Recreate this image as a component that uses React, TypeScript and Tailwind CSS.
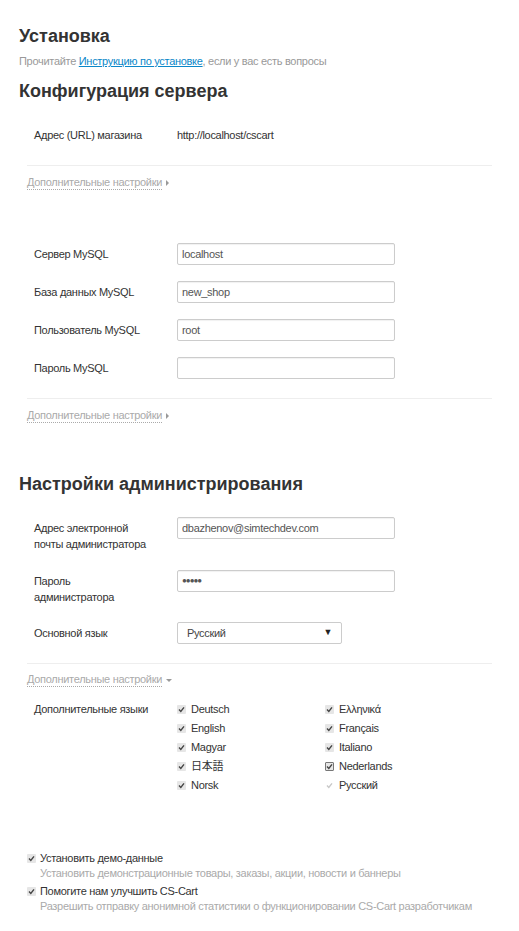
import React from "react";

const FONT = { fontFamily: '"Liberation Sans", Arial, "Noto Sans CJK JP", sans-serif' };

function Check({ muted = false, boxed = false }: { muted?: boolean; boxed?: boolean }) {
  return (
    <span
      className={`inline-flex w-[9px] h-[9px] shrink-0 items-center justify-center rounded-[1px] ${
        muted ? "bg-transparent" : "bg-[#e6e6e6]"
      } ${boxed ? "border border-[#777]" : ""}`}
    >
      <svg width="7" height="7" viewBox="0 0 7 7">
        <path
          d="M1 3.6 L2.8 5.4 L6 1.4"
          fill="none"
          stroke={muted ? "#c8c8c8" : "#444"}
          strokeWidth="1.4"
        />
      </svg>
    </span>
  );
}

function MoreLink({ open = false }: { open?: boolean }) {
  return (
    <div className="px-[8px] flex items-center h-4 text-[11px] text-[#aaa]">
      <span className="border-b border-dotted border-[#aaa] leading-[13px]">Дополнительные настройки</span>
      {open ? (
        <span className="ml-[4px] inline-block w-0 h-0 border-l-[3px] border-r-[3px] border-t-[3px] border-l-transparent border-r-transparent border-t-[#999]" />
      ) : (
        <span className="ml-[4px] inline-block w-0 h-0 border-t-[3px] border-b-[3px] border-l-[3px] border-t-transparent border-b-transparent border-l-[#999]" />
      )}
    </div>
  );
}

function Separator() {
  return <div className="mx-[8px] h-px bg-[#eee]" />;
}

function InputRow({ label, value, type = "text" }: { label: React.ReactNode; value: string; type?: string }) {
  return (
    <div className="flex items-start pl-[15px]">
      <div className="w-[143px] pt-[3px] leading-4 text-[11px] text-[#333]">{label}</div>
      <div className="w-[218px] h-[22px] border border-[#ccc] rounded-[2px] shadow-[inset_0_1px_1px_rgba(0,0,0,0.06)] px-[4px] flex items-center text-[11px] text-[#555]">
        {type === "password" ? <span className="tracking-[-1px] text-[8px]">●●●●●</span> : value}
      </div>
    </div>
  );
}

const LANGS_LEFT = ["Deutsch", "English", "Magyar", "日本語", "Norsk"];
const LANGS_RIGHT = ["Ελληνικά", "Français", "Italiano", "Nederlands", "Русский"];

export default function App() {
  return (
    <div className="bg-white min-h-[931px] px-[19px] pt-[25px] text-[#333] tracking-[-0.3px]" style={FONT}>
      <h1 className="text-[18px] leading-[22px] font-bold text-[#333] tracking-normal">Установка</h1>
      <p className="mt-[6px] text-[11px] leading-4 text-[#999]">
        Прочитайте{" "}
        <a className="text-[#0b87c9] underline" href="#">
          Инструкцию по установке
        </a>
        , если у вас есть вопросы
      </p>

      <h2 className="mt-[11px] text-[18px] leading-[22px] font-bold text-[#333] tracking-normal">
        Конфигурация сервера
      </h2>

      <div className="mt-[22px] flex items-center h-[22px] pl-[15px] text-[11px]">
        <div className="w-[143px] text-[#333]">Адрес (URL) магазина</div>
        <div className="text-[#333]">http://localhost/cscart</div>
      </div>

      <div className="mt-[19px]">
        <Separator />
      </div>
      <div className="mt-[9px]">
        <MoreLink />
      </div>

      <div className="mt-[52px] flex flex-col gap-[16px]">
        <InputRow label="Сервер MySQL" value="localhost" />
        <InputRow label="База данных MySQL" value="new_shop" />
        <InputRow label="Пользователь MySQL" value="root" />
        <InputRow label="Пароль MySQL" value="" />
      </div>

      <div className="mt-[19px]">
        <Separator />
      </div>
      <div className="mt-[9px]">
        <MoreLink />
      </div>

      <h2 className="mt-[49px] text-[18px] leading-[22px] font-bold text-[#333] tracking-normal">
        Настройки администрирования
      </h2>

      <div className="mt-[22px] flex flex-col">
        <InputRow
          label={
            <>
              Адрес электронной
              <br />
              почты администратора
            </>
          }
          value="dbazhenov@simtechdev.com"
        />
        <div className="mt-[18px]">
          <InputRow
            label={
              <>
                Пароль
                <br />
                администратора
              </>
            }
            value=""
            type="password"
          />
        </div>
        <div className="mt-[17px] flex items-center pl-[15px]">
          <div className="w-[143px] text-[11px] text-[#333]">Основной язык</div>
          <div className="w-[165px] h-[22px] border border-[#ccc] rounded-[2px] pl-[9px] pr-[9px] flex items-center justify-between text-[11px] text-[#444]">
            <span>Русский</span>
            <span className="text-[9px] text-[#222]">▼</span>
          </div>
        </div>
      </div>

      <div className="mt-[19px]">
        <Separator />
      </div>
      <div className="mt-[8px]">
        <MoreLink open />
      </div>

      <div className="mt-[12px] flex pl-[15px] text-[11px]">
        <div className="w-[143px] h-[19px] flex items-center text-[#333]">Дополнительные языки</div>
        <div className="w-[148px] flex flex-col">
          {LANGS_LEFT.map((l) => (
            <div key={l} className="h-[19px] flex items-center gap-[5px] text-[#333]">
              <Check />
              <span>{l}</span>
            </div>
          ))}
        </div>
        <div className="flex flex-col">
          {LANGS_RIGHT.map((l) => (
            <div key={l} className="h-[19px] flex items-center gap-[5px] text-[#333]">
              <Check boxed={l === "Nederlands"} muted={l === "Русский"} />
              <span>{l}</span>
            </div>
          ))}
        </div>
      </div>

      <div className="mt-[56px] px-[8px] text-[11px] leading-[15px]">
        <div className="flex items-center gap-[4px] text-[#333]">
          <Check />
          <span>Установить демо-данные</span>
        </div>
        <div className="pl-[13px] text-[#aaa]">Установить демонстрационные товары, заказы, акции, новости и баннеры</div>
        <div className="mt-[3px] flex items-center gap-[4px] text-[#333]">
          <Check />
          <span>Помогите нам улучшить CS-Cart</span>
        </div>
        <div className="pl-[13px] text-[#aaa] whitespace-nowrap">
          Разрешить отправку анонимной статистики о функционировании CS-Cart разработчикам
        </div>
      </div>
    </div>
  );
}
